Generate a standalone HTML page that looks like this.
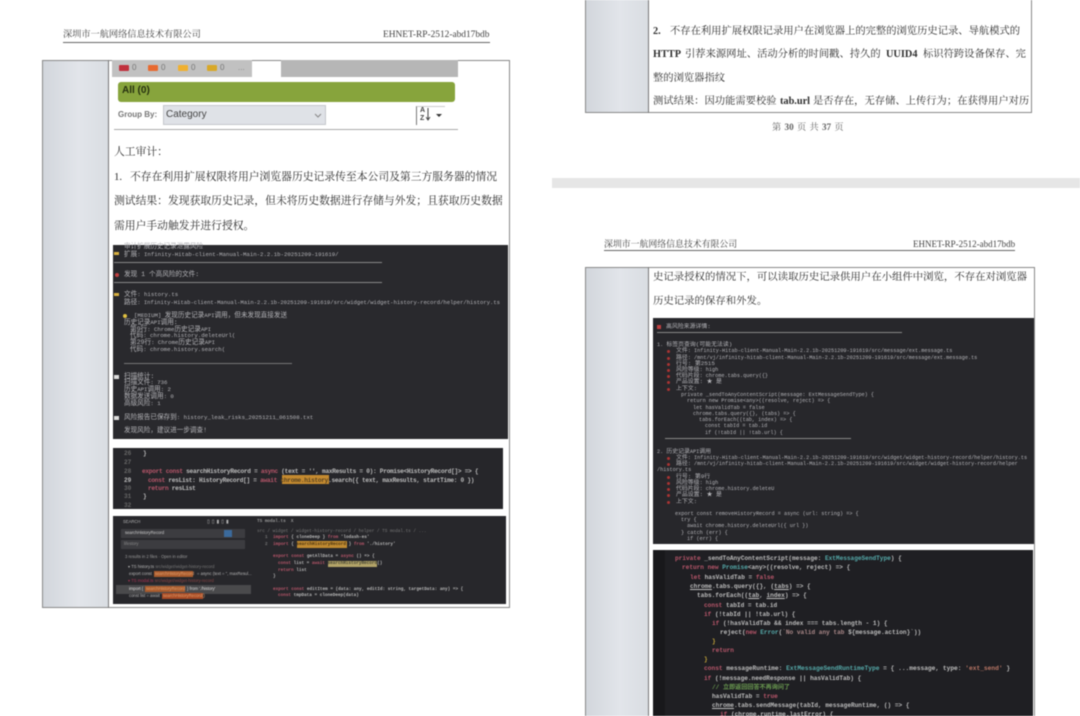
<!DOCTYPE html>
<html lang="zh-CN"><head><meta charset="utf-8"><title>报告</title>
<style>
html,body{margin:0;padding:0;background:#fff}
#p{position:relative;width:1080px;height:716px;overflow:hidden;background:#fff;filter:blur(.45px);font-family:"Liberation Serif","Noto Serif CJK SC",serif;color:#333}
#p div{position:absolute;white-space:nowrap}
.g{background:linear-gradient(90deg,#d2d6dc,#e2e5ea 55%,#d9dde2)}
.h{font-size:9.2px;line-height:12px;color:#444}
.b{font-size:10.8px;line-height:16px;color:#2e2e2e}
.q{font-size:10.3px;line-height:16px;color:#2e2e2e}
.d{background:#29292d}
.m div{font:5.7px/8px "Liberation Mono","Noto Sans CJK SC",monospace;color:#b4b4b8}
.m i{font-style:normal;font-size:6.6px}
.m.n div{font-size:5.2px}
.m.n i{font-size:5.9px}
.c div{font:6.1px/9px "Liberation Mono","Noto Sans CJK SC",monospace;color:#bdbdbd;font-weight:bold}
.s div{font:4.2px/6px "Liberation Sans",sans-serif;color:#b4b4b4}
.t div{font:4.35px/6px "Liberation Mono",monospace;color:#bbb;font-weight:bold}
.r{width:3px;height:3px;background:#a33;border-radius:2px}
.k{color:#b8566a!important}
</style></head><body><div id="p">

<!-- left page header -->
<div class="h" style="left:63px;top:28px">深圳市一航网络信息技术有限公司</div>
<div class="h" style="left:383px;top:29px;font-size:9.4px">EHNET-RP-2512-abd17bdb</div>
<div style="left:63px;top:42px;width:427px;height:1px;background:#666"></div>

<!-- left table -->
<div style="left:42px;top:60px;width:468px;height:548px;border:1px solid #888;box-sizing:border-box"></div>
<div class="g" style="left:43px;top:61px;width:65px;height:546px"></div>
<div style="left:108px;top:60px;width:1px;height:548px;background:#777"></div>

<div style="left:112px;top:60px;width:140px;height:17px;background:#c1c1c1"></div>
<div style="left:281px;top:60px;width:177px;height:17px;background:#b6b6b6"></div>
<div style="left:119px;top:65px;width:10px;height:6px;background:#c0303c;border-radius:1px"></div>
<div style="left:148px;top:65px;width:10px;height:6px;background:#e86a30;border-radius:1px"></div>
<div style="left:178px;top:65px;width:10px;height:6px;background:#f0b030;border-radius:1px"></div>
<div style="left:207px;top:65px;width:10px;height:6px;background:#d8a828;border-radius:1px"></div>
<div style="left:132px;top:63px;font:8px/10px 'Liberation Sans',sans-serif;color:#777">0</div>
<div style="left:161px;top:63px;font:8px/10px 'Liberation Sans',sans-serif;color:#777">0</div>
<div style="left:191px;top:63px;font:8px/10px 'Liberation Sans',sans-serif;color:#777">0</div>
<div style="left:220px;top:63px;font:8px/10px 'Liberation Sans',sans-serif;color:#777">0</div>
<div style="left:238px;top:63px;font:8px/10px 'Liberation Sans',sans-serif;color:#888">...</div>
<div style="left:118px;top:82px;width:337px;height:20px;background:#87a43c;border-radius:3px"></div>
<div style="left:122px;top:84px;font:bold 10px/14px 'Liberation Sans',sans-serif;color:#263010">All (0)</div>
<div style="left:118px;top:109px;font:bold 8px/12px 'Liberation Sans',sans-serif;color:#777">Group By:</div>
<div style="left:163px;top:105px;width:163px;height:20px;background:#dfe2e7;border:1px solid #c5c8cc;box-sizing:border-box"></div>
<div style="left:166px;top:108px;font:10px/14px 'Liberation Sans',sans-serif;color:#444">Category</div>
<svg style="position:absolute;left:314px;top:113px" width="8" height="5"><path d="M1 1l3 3 3-3" fill="none" stroke="#888"/></svg>
<div style="left:416px;top:106px;width:29px;height:19px;border-left:1px solid #777;border-top:1px solid #ccc;box-sizing:border-box"></div>
<div style="left:420px;top:107px;font:bold 7px/8px 'Liberation Sans',sans-serif;color:#444;white-space:normal;width:6px">A<br>Z</div>
<svg style="position:absolute;left:426px;top:107px" width="18" height="16"><path d="M2 1v12M0 10l2 3 2-3" fill="none" stroke="#444"/><path d="M10 7h6l-3 3z" fill="#333"/></svg>
<div style="left:114px;top:129px;width:344px;height:1px;background:#aaa"></div>

<div class="b" style="left:114px;top:144px">人工审计：</div>
<div class="b" style="left:114px;top:169px">1.</div>
<div class="b" style="left:130px;top:169px">不存在利用扩展权限将用户浏览器历史记录传至本公司及第三方服务器的情况</div>
<div class="b" style="left:114px;top:193px">测试结果：发现获取历史记录，但未将历史数据进行存储与外发；且获取历史数据</div>
<div class="b" style="left:114px;top:218px">需用户手动触发并进行授权。</div>

<!-- dark block 1 -->
<div class="d" style="left:113px;top:245px;width:395px;height:194px"></div>
<div class="m">
<div style="left:124px;top:243px"><i>审计扩展历史记录泄露风险</i></div>
<div style="left:114px;top:252px;width:5px;height:3px;background:#d8b040"></div>
<div style="left:124px;top:251px"><i>扩展</i>: Infinity-Hitab-client-Manual-Main-2.2.1b-20251209-191619/</div>
<div style="left:114px;top:262px;width:268px;height:1px;background:#888"></div>
<div style="left:115px;top:273px;width:4px;height:4px;background:#c04040;border-radius:2px"></div>
<div style="left:124px;top:271px"><i>发现 1 个高风险的文件:</i></div>
<div style="left:114px;top:282px;width:268px;height:1px;background:#888"></div>
<div style="left:114px;top:293px;width:5px;height:3px;background:#d8b040"></div>
<div style="left:124px;top:291px"><i>文件</i>: history.ts</div>
<div style="left:124px;top:299px;font-size:5.55px"><i>路径</i>: Infinity-Hitab-client-Manual-Main-2.2.1b-20251209-191619/src/widget/widget-history-record/helper/history.ts</div>
<div style="left:123px;top:314px;width:4px;height:4px;background:#e0c040;border-radius:2px"></div>
<div style="left:134px;top:312px">[MEDIUM] <i>发现历史记录</i>API<i>调用，但未发现直接发送</i></div>
<div style="left:124px;top:319px"><i>历史记录</i>API<i>调用:</i></div>
<div style="left:130px;top:326px"><i>第9行</i>: Chrome<i>历史记录</i>API</div>
<div style="left:130px;top:332px"><i>代码</i>: chrome.history.deleteUrl(</div>
<div style="left:130px;top:339px"><i>第29行</i>: Chrome<i>历史记录</i>API</div>
<div style="left:130px;top:346px"><i>代码</i>: chrome.history.search(</div>
<div style="left:124px;top:363px;width:168px;height:1px;background:#777"></div>
<div style="left:114px;top:375px;width:5px;height:4px;background:#ddd"></div>
<div style="left:124px;top:373px"><i>扫描统计:</i></div>
<div style="left:124px;top:379px"><i>扫描文件</i>: 736</div>
<div style="left:124px;top:386px"><i>历史</i>API<i>调用</i>: 2</div>
<div style="left:124px;top:393px"><i>数据发送调用</i>: 0</div>
<div style="left:124px;top:400px"><i>高级风险</i>: 1</div>
<div style="left:114px;top:416px;width:5px;height:4px;background:#ddd"></div>
<div style="left:124px;top:414px"><i>风险报告已保存到</i>: history_leak_risks_20251211_061508.txt</div>
<div style="left:124px;top:427px"><i>发现风险，建议进一步调查!</i></div>
</div>

<!-- dark block 2 -->
<div class="d" style="left:113px;top:448px;width:390px;height:61px;background:#26262a"></div>
<div style="left:282px;top:475px;width:47px;height:9px;background:#c48a30"></div>
<div class="c">
<div style="left:124px;top:449px;color:#666">26</div><div style="left:143px;top:449px">}</div>
<div style="left:124px;top:458px;color:#666">27</div>
<div style="left:124px;top:467px;color:#666">28</div>
<div style="left:142px;top:467px;letter-spacing:-.26px"><span class="k">export const</span> searchHistoryRecord = <span class="k">async</span> (text = '', maxResults = 0): Promise&lt;HistoryRecord[]&gt; =&gt; {</div>
<div style="left:124px;top:476px;color:#bbb">29</div>
<div style="left:148px;top:476px;letter-spacing:-.26px"><span class="k">const</span> resList: HistoryRecord[] = <span class="k">await</span> <span style="color:#5a4420">chrome.history</span>.search({ text, maxResults, startTime: 0 })</div>
<div style="left:124px;top:484px;color:#666">30</div>
<div style="left:148px;top:484px;letter-spacing:-.26px"><span class="k">return</span> resList</div>
<div style="left:124px;top:492px;color:#666">31</div><div style="left:143px;top:492px">}</div>
<div style="left:124px;top:501px;color:#666">32</div>
</div>

<!-- dark block 3 -->
<div class="d" style="left:113px;top:516px;width:393px;height:88px;background:#27272b"></div>
<div style="left:121px;top:529px;width:124px;height:9px;background:#3c3c40"></div>
<div style="left:121px;top:540px;width:124px;height:9px;background:#3c3c40"></div>
<div style="left:224px;top:530px;width:8px;height:7px;background:#3b6a9c"></div>
<div style="left:116px;top:585px;width:135px;height:9px;background:#4a4a4c"></div>
<div style="left:154px;top:571px;width:39px;height:6px;background:#a85a2c"></div>
<div style="left:145px;top:586px;width:40px;height:6px;background:#a85a2c"></div>
<div style="left:162px;top:593px;width:41px;height:6px;background:#a84a24"></div>
<div style="left:297px;top:541px;width:50px;height:7px;background:#c08a30"></div>
<div style="left:328px;top:561px;width:49px;height:6px;background:#b3a468"></div>
<div class="s">
<div style="left:123px;top:519px">SEARCH</div>
<div style="left:207px;top:519px;letter-spacing:2px;font-size:5px">▯▯▮▯▮</div>
<div style="left:125px;top:530px;color:#ccc">searchHistoryRecord</div>
<div style="left:124px;top:541px;color:#888">lifestory</div>
<div style="left:125px;top:554px;color:#999">3 results in 2 files · Open in editor</div>
<div style="left:128px;top:564px">▾ TS history.ts <span style="color:#777">src/widget/widget-history-record</span></div>
<div style="left:129px;top:571px">export const</div>
<div style="left:155px;top:571px;color:#e0a070">searchHistoryRecord</div>
<div style="left:197px;top:571px">= async (text = '', maxResul...</div>
<div style="left:128px;top:578px;color:#a35">▾ TS modal.ts <span style="color:#844">src/widget/widget-history-record</span></div>
<div style="left:129px;top:586px;color:#ddd">import {</div>
<div style="left:146px;top:586px;color:#e0a070">searchHistoryRecord</div>
<div style="left:187px;top:586px;color:#ddd">} from './history'</div>
<div style="left:129px;top:593px">const list = await</div>
<div style="left:163px;top:593px;color:#e0a070">searchHistoryRecord()</div>
</div>
<div class="t">
<div style="left:257px;top:519px;color:#999">TS modal.ts &nbsp;X</div>
<div style="left:257px;top:529px;color:#777;font-weight:normal">src / widget / widget-history-record / helper / TS modal.ts / ...</div>
<div style="left:265px;top:535px;color:#777">1</div><div style="left:273px;top:535px"><span class="k">import</span> { cloneDeep } <span class="k">from</span> 'lodash-es'</div>
<div style="left:265px;top:542px;color:#777">2</div><div style="left:273px;top:542px"><span class="k">import</span> { <span style="color:#4a3410">searchHistoryRecord</span> } <span class="k">from</span> './history'</div>
<div style="left:273px;top:554px"><span class="k">export const</span> getAllData = <span class="k">async</span> () =&gt; {</div>
<div style="left:278px;top:561px"><span class="k">const</span> list = <span class="k">await</span> <span style="color:#443">searchHistoryRecord</span>()</div>
<div style="left:278px;top:568px"><span class="k">return</span> list</div>
<div style="left:273px;top:574px">}</div>
<div style="left:273px;top:587px"><span class="k">export const</span> editItem = (data: any, editId: string, targetData: any) =&gt; {</div>
<div style="left:278px;top:593px"><span class="k">const</span> tmpData = cloneDeep(data)</div>
</div>

<!-- right top table -->
<div style="left:585px;top:-2px;width:447px;height:115px;border:1px solid #888;box-sizing:border-box"></div>
<div class="g" style="left:586px;top:0;width:62px;height:112px"></div>
<div style="left:648px;top:0;width:1px;height:113px;background:#777"></div>
<div class="q" style="left:653px;top:24px"><b>2.</b></div>
<div class="q" style="left:670px;top:24px">不存在利用扩展权限记录用户在浏览器上的完整的浏览历史记录、导航模式的</div>
<div class="q" style="left:653px;top:47px"><b>HTTP</b></div>
<div class="q" style="left:685px;top:47px">引荐来源网址、活动分析的时间戳、持久的</div>
<div class="q" style="left:886px;top:47px"><b>UUID4</b></div>
<div class="q" style="left:923px;top:47px">标识符跨设备保存、完</div>
<div class="q" style="left:653px;top:71px">整的浏览器指纹</div>
<div class="q" style="left:653px;top:94px">测试结果：因功能需要校验</div>
<div class="q" style="left:780px;top:94px"><b>tab.url</b></div>
<div class="q" style="left:813px;top:94px">是否存在，无存储、上传行为；在获得用户对历</div>
<div class="h" style="left:772px;top:121px;word-spacing:1px;color:#666">第 <b>30</b> 页 共 <b>37</b> 页</div>

<div style="left:552px;top:178px;width:528px;height:10px;background:#e6e6e6"></div>

<!-- right page header -->
<div class="h" style="left:604px;top:238px;font-size:8.9px">深圳市一航网络信息技术有限公司</div>
<div class="h" style="left:913px;top:238px;font-size:9px">EHNET-RP-2512-abd17bdb</div>
<div style="left:604px;top:250px;width:411px;height:1px;background:#666"></div>

<!-- right lower table -->
<div style="left:585px;top:267px;width:450px;height:452px;border:1px solid #888;box-sizing:border-box"></div>
<div class="g" style="left:586px;top:268px;width:62px;height:448px"></div>
<div style="left:648px;top:267px;width:1px;height:449px;background:#777"></div>
<div class="q" style="left:653px;top:270px;font-size:10.4px">史记录授权的情况下，可以读取历史记录供用户在小组件中浏览，不存在对浏览器</div>
<div class="q" style="left:653px;top:294px;font-size:10.4px">历史记录的保存和外发。</div>

<!-- right dark block 1 -->
<div class="d" style="left:653px;top:318px;width:381px;height:226px;background:#27272b"></div>
<div class="m n">
<div style="left:657px;top:325px;width:4px;height:4px;background:#c04040"></div>
<div style="left:666px;top:323px"><i>高风险来源详情:</i></div>
<div style="left:657px;top:332px;width:245px;height:1px;background:#888"></div>
<div style="left:657px;top:341px">1. <i>标签页查询(可能无法读)</i></div>
<div class="r" style="left:667px;top:350px"></div><div style="left:676px;top:347px"><i>文件</i>: Infinity-Hitab-client-Manual-Main-2.2.1b-20251209-191619/src/message/ext.message.ts</div>
<div class="r" style="left:667px;top:357px"></div><div style="left:676px;top:354px"><i>路径</i>: /mnt/vj/infinity-hitab-client-Manual-Main-2.2.1b-20251209-191619/src/message/ext.message.ts</div>
<div class="r" style="left:667px;top:363px"></div><div style="left:676px;top:360px"><i>行号: 第2515</i></div>
<div class="r" style="left:667px;top:369px"></div><div style="left:676px;top:366px"><i>风险等级</i>: high</div>
<div class="r" style="left:667px;top:375px"></div><div style="left:676px;top:372px"><i>代码片段</i>: chrome.tabs.query({}</div>
<div class="r" style="left:667px;top:381px"></div><div style="left:676px;top:378px"><i>产品设置: ★ 是</i></div>
<div class="r" style="left:667px;top:388px"></div><div style="left:676px;top:385px"><i>上下文:</i></div>
<div style="left:681px;top:391px">private _sendToAnyContentScript(message: ExtMessageSendType) {</div>
<div style="left:687px;top:397px">return new Promise&lt;any&gt;((resolve, reject) =&gt; {</div>
<div style="left:693px;top:404px">let hasValidTab = false</div>
<div style="left:693px;top:410px">chrome.tabs.query({}, (tabs) =&gt; {</div>
<div style="left:699px;top:416px">tabs.forEach((tab, index) =&gt; {</div>
<div style="left:705px;top:422px">const tabId = tab.id</div>
<div style="left:705px;top:429px">if (!tabId || !tab.url) {</div>
<div style="left:665px;top:438px;width:186px;height:1px;background:#888"></div>
<div style="left:657px;top:448px">2. <i>历史记录</i>API<i>调用</i></div>
<div class="r" style="left:667px;top:457px"></div><div style="left:676px;top:454px"><i>文件</i>: Infinity-Hitab-client-Manual-Main-2.2.1b-20251209-191619/src/widget/widget-history-record/helper/history.ts</div>
<div class="r" style="left:667px;top:463px"></div><div style="left:676px;top:460px"><i>路径</i>: /mnt/vj/infinity-hitab-client-Manual-Main-2.2.1b-20251209-191619/src/widget/widget-history-record/helper</div>
<div style="left:657px;top:466px">/history.ts</div>
<div class="r" style="left:667px;top:476px"></div><div style="left:676px;top:473px"><i>行号: 第9行</i></div>
<div class="r" style="left:667px;top:482px"></div><div style="left:676px;top:479px"><i>风险等级</i>: high</div>
<div class="r" style="left:667px;top:488px"></div><div style="left:676px;top:485px"><i>代码片段</i>: chrome.history.deleteU</div>
<div class="r" style="left:667px;top:494px"></div><div style="left:676px;top:491px"><i>产品设置: ★ 是</i></div>
<div class="r" style="left:667px;top:501px"></div><div style="left:676px;top:498px"><i>上下文:</i></div>
<div style="left:675px;top:510px">export const removeHistoryRecord = async (url: string) =&gt; {</div>
<div style="left:681px;top:516px">try {</div>
<div style="left:687px;top:522px">await chrome.history.deleteUrl({ url })</div>
<div style="left:681px;top:529px">} catch (err) {</div>
<div style="left:687px;top:535px">if (err) {</div>
</div>

<!-- right dark block 2 -->
<div class="d" style="left:653px;top:550px;width:380px;height:166px;background:#1f1f23"></div>
<div style="left:653px;top:550px;width:12px;height:166px;background:#18181b"></div>
<div class="c" id="rc">
<div style="left:675px;top:554px"><span class="k">private</span> _sendToAnyContentScript(message: <span style="color:#5aa">ExtMessageSendType</span>) {</div>
<div style="left:682px;top:563px"><span class="k">return new</span> <span style="color:#5aa">Promise</span>&lt;any&gt;((resolve, reject) =&gt; {</div>
<div style="left:690px;top:573px"><span class="k">let</span> hasValidTab = <span class="k">false</span></div>
<div style="left:690px;top:582px"><u>chrome</u>.tabs.query({}, (<u>tabs</u>) =&gt; {</div>
<div style="left:697px;top:591px">tabs.forEach((<u>tab</u>, <u>index</u>) =&gt; {</div>
<div style="left:704px;top:601px"><span class="k">const</span> tabId = tab.id</div>
<div style="left:704px;top:610px"><span class="k">if</span> (!tabId || !tab.url) {</div>
<div style="left:712px;top:619px"><span class="k">if</span> (!hasValidTab &amp;&amp; index === tabs.length - 1) {</div>
<div style="left:720px;top:628px">reject(<span class="k">new</span> <span style="color:#5aa">Error</span>(<span style="color:#a88">`No valid any tab</span> ${message.action}`))</div>
<div style="left:712px;top:637px;color:#c9a93a">}</div>
<div style="left:712px;top:646px" class="k">return</div>
<div style="left:704px;top:655px;color:#c9a93a">}</div>
<div style="left:704px;top:664px;font-size:6.22px"><span class="k">const</span> messageRuntime: <span style="color:#5aa">ExtMessageSendRuntimeType</span> = { ...message, type: <span style="color:#b76">'ext_send'</span> }</div>
<div style="left:704px;top:674px"><span class="k">if</span> (!message.needResponse || hasValidTab) {</div>
<div style="left:712px;top:683px;color:#6a9a50">// 立即返回回答不再询问了</div>
<div style="left:712px;top:692px">hasValidTab = <span class="k">true</span></div>
<div style="left:712px;top:701px"><u>chrome</u>.tabs.sendMessage(tabId, messageRuntime, () =&gt; {</div>
<div style="left:720px;top:710px"><span class="k">if</span> (chrome.runtime.lastError) {</div>
</div>

</div></body></html>
